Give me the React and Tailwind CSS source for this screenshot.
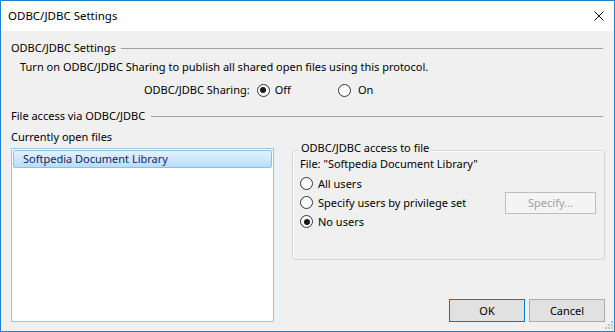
import React from "react";

function Radio({ checked }) {
    return (
        <span className="flex h-[13px] w-[13px] shrink-0 items-center justify-center rounded-full border border-[#333333] bg-white">
            {checked && <span className="h-[6px] w-[6px] rounded-full bg-[#1a1a1a]" />}
        </span>
    );
}

function Header({ children, gap }) {
    return (
        <div className="flex h-[16px] items-center">
            <span>{children}</span>
            <span className={`${gap} mr-[2px] h-px flex-1 bg-[#a0a0a0]`} />
        </div>
    );
}

export default function App() {
    return (
        <div className="flex h-[332px] w-[615px] flex-col border border-[#1883d7] bg-[#f0f0f0] text-[11px] leading-[16px] text-black font-['Noto_Sans',sans-serif]">
            {/* Title bar */}
            <div className="flex h-[30px] shrink-0 items-center justify-between bg-white pl-[7px] pr-[9px] text-[11.5px]">
                <span>ODBC/JDBC Settings</span>
                <svg width="10" height="10" viewBox="0 0 10 10" className="mr-[1px]">
                    <path d="M0.5 0.5 L9.5 9.5 M9.5 0.5 L0.5 9.5" stroke="#111" strokeWidth="1" />
                </svg>
            </div>

            {/* Body */}
            <div className="relative flex flex-1 flex-col pl-[10px] pr-[9px]">
                <div className="mt-[9px]">
                    <Header gap="ml-[5px]">ODBC/JDBC Settings</Header>
                </div>
                <div className="mt-[3px] h-[16px] pl-[9px]">
                    Turn on ODBC/JDBC Sharing to publish all shared open files using this protocol.
                </div>
                <div className="mt-[7px] flex h-[16px] items-center pl-[133px]">
                    <span>ODBC/JDBC Sharing:</span>
                    <span className="ml-[7px]"><Radio checked /></span>
                    <span className="ml-[5px]">Off</span>
                    <span className="ml-[47px]"><Radio /></span>
                    <span className="ml-[7px]">On</span>
                </div>

                <div className="mt-[10px]">
                    <Header gap="ml-[6px]">File access via ODBC/JDBC</Header>
                </div>
                <div className="mt-[5px] h-[16px]">Currently open files</div>

                <div className="mt-[3px] flex h-[174px]">
                    {/* List */}
                    <div className="h-[174px] w-[263px] border border-[#9cc4e4] bg-white p-[1px]">
                        <div className="flex h-[18px] items-center rounded-[2px] border border-[#84c3ef] bg-gradient-to-b from-[#e3f3ff] to-[#b7defa] pl-[9px] text-[#1c1c64]">
                            Softpedia Document Library
                        </div>
                    </div>

                    {/* Right side */}
                    <div className="ml-[18px] flex flex-1 flex-col">
                        <div className="relative mt-[2px] h-[110px] rounded-[3px] border border-[#d5d5d5] pl-[7px] pr-[8px] pt-[5px] shadow-[inset_1px_1px_0_#ffffff]">
                            <span className="absolute -top-[11px] left-[6px] bg-[#f0f0f0] px-[2px]">ODBC/JDBC access to file</span>
                            <div className="h-[16px]">File: "Softpedia Document Library"</div>
                            <div className="mt-[2px] flex h-[19px] items-center">
                                <Radio />
                                <span className="ml-[5px]">All users</span>
                            </div>
                            <div className="flex h-[19px] items-center justify-between">
                                <div className="flex items-center">
                                    <Radio />
                                    <span className="ml-[5px]">Specify users by privilege set</span>
                                </div>
                                <div className="flex h-[22px] w-[91px] shrink-0 items-center justify-center border border-[#bfbfbf] bg-[#f4f4f4] text-[#a0a0a0]">
                                    Specify...
                                </div>
                            </div>
                            <div className="flex h-[19px] items-center">
                                <Radio checked />
                                <span className="ml-[5px]">No users</span>
                            </div>
                        </div>

                        <div className="mt-auto flex justify-end gap-[4px]">
                            <button className="h-[23px] w-[76px] border border-[#0078d7] bg-[#e1e1e1]">OK</button>
                            <button className="h-[23px] w-[76px] border border-[#adadad] bg-[#e1e1e1]">Cancel</button>
                        </div>
                    </div>
                </div>

                {/* Resize grip */}
                <svg width="10" height="10" viewBox="0 0 10 10" className="absolute bottom-[1px] right-[1px]">
                    {[[8, 0], [8, 3], [5, 3], [8, 6], [5, 6], [2, 6]].map(([x, y], i) => (
                        <rect key={i} x={x} y={y + 1} width="2" height="2" fill="#c4c4c4" />
                    ))}
                </svg>
            </div>
        </div>
    );
}
